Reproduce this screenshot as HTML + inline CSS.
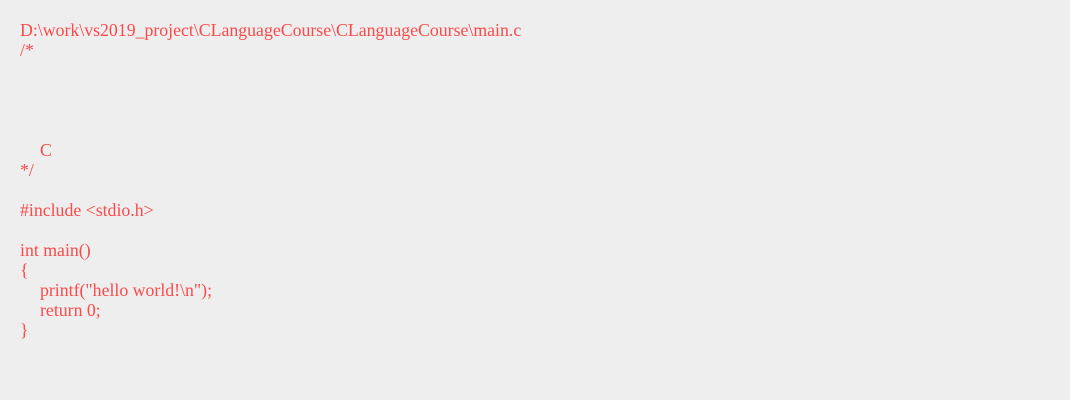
<!DOCTYPE html>
<html><head><meta charset="utf-8"><style>
html,body{margin:0;padding:0;background:#eeeeee;width:1070px;height:400px;overflow:hidden}
pre{margin:0;position:absolute;left:20px;top:20px;font-family:"Liberation Serif","Times New Roman",Times,serif;font-size:17.8px;line-height:20px;color:#fa4a4a;white-space:pre}
.i{display:inline-block;width:20px}
</style></head><body>
<pre>D:\work\vs2019_project\CLanguageCourse\CLanguageCourse\main.c
/*




<span class="i"></span>C
*/

#include &lt;stdio.h&gt;

int main()
{
<span class="i"></span>printf("hello world!\n");
<span class="i"></span>return 0;
}</pre>
</body></html>
